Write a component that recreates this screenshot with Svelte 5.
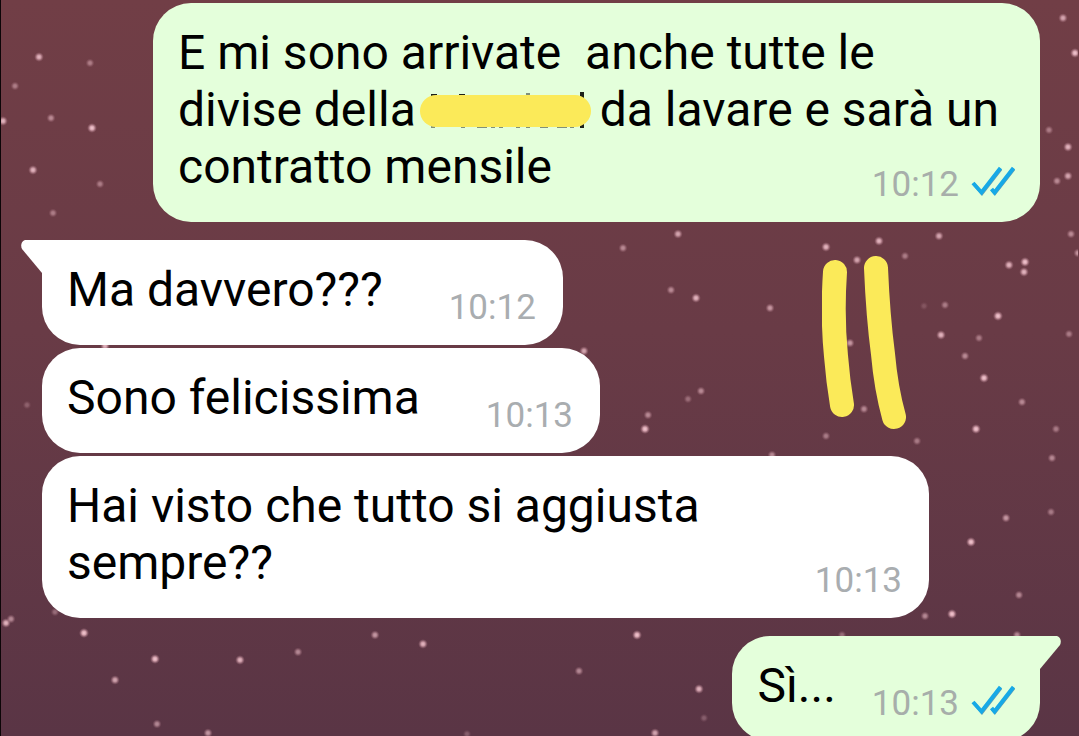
<script lang="ts">
	type Message = {
		id: number;
		type: 'sent' | 'received';
		parts: string[];
		time: string;
		first?: boolean;
		tail?: boolean;
	};

	// a gap between two parts is a name crossed out with the marker
	const messages: Message[] = [
		{
			id: 1,
			type: 'sent',
			parts: ['E mi sono arrivate\u00a0 anche tutte le divise della', 'da lavare e sarà un contratto mensile'],
			time: '10:12'
		},
		{ id: 2, type: 'received', parts: ['Ma davvero???'], time: '10:12', first: true, tail: true },
		{ id: 3, type: 'received', parts: ['Sono felicissima'], time: '10:13' },
		{ id: 4, type: 'received', parts: ['Hai visto che tutto si aggiusta sempre??'], time: '10:13' },
		{ id: 5, type: 'sent', parts: ['Sì...'], time: '10:13', first: true, tail: true }
	];

	// x, y, brightness
	const stars = [
		[39, 57, 0.9], [90, 63, 0.5], [15, 86, 0.5], [3, 121, 0.9], [51, 118, 0.6], [92, 128, 1],
		[33, 170, 0.9], [100, 184, 0.5], [53, 213, 0.5], [623, 248, 0.6], [678, 234, 0.8], [671, 290, 0.6],
		[696, 298, 0.9], [770, 308, 0.7], [584, 351, 0.8], [701, 391, 0.6], [688, 399, 0.4], [648, 415, 0.6],
		[645, 429, 1.1], [772, 455, 0.6], [826, 247, 0.9], [879, 241, 0.9], [857, 260, 0.8], [939, 236, 0.8],
		[905, 256, 0.5], [1009, 265, 0.9], [1025, 262, 1], [1024, 272, 0.9], [1071, 234, 0.6], [1078, 253, 0.7],
		[945, 305, 0.5], [924, 306, 0.2], [998, 316, 1.1], [941, 335, 0.9], [979, 338, 0.5], [1069, 334, 0.5],
		[965, 356, 0.6], [984, 378, 1], [850, 343, 0.7], [864, 409, 0.6], [826, 436, 0.5], [917, 441, 0.5],
		[1022, 402, 0.6], [976, 429, 1], [1056, 429, 0.5], [1052, 458, 0.6], [1006, 518, 0.7], [1051, 512, 0.5],
		[971, 542, 1], [1019, 595, 0.6], [925, 616, 0.6], [952, 614, 1], [1017, 635, 0.6], [1063, 18, 0.8],
		[1075, 53, 1], [1049, 130, 0.5], [1068, 147, 0.9], [1068, 176, 0.8], [1057, 181, 0.6],
		[6, 623, 0.9], [11, 619, 0.6], [84, 633, 1.1], [155, 659, 1], [115, 680, 0.8], [240, 660, 0.9],
		[298, 652, 0.6], [157, 724, 0.6], [208, 733, 0.7], [375, 635, 0.7], [423, 644, 0.9], [637, 635, 1],
		[579, 671, 0.6], [699, 689, 0.9], [704, 718, 0.3], [655, 733, 0.8], [842, 635, 0.4], [467, 734, 0.3],
		[105, 346, 0.9], [27, 405, 0.3], [55, 612, 0.4]
	];
</script>

<main class="chat">
	<svg class="wallpaper" aria-hidden="true">
		<defs>
			<radialGradient id="star">
				<stop offset="0" stop-color="#f6cdd6" />
				<stop offset="0.4" stop-color="#e3b0bb" stop-opacity="0.9" />
				<stop offset="1" stop-color="#a87482" stop-opacity="0" />
			</radialGradient>
		</defs>
		{#each stars as [x, y, light]}
			<circle cx={x} cy={y} r={4 + light} opacity={Math.min(light, 1)} fill="url(#star)" />
		{/each}
	</svg>

	{#each messages as message (message.id)}
		<article class="message {message.type}" class:first={message.first} class:tailed={message.tail}>
			{#if message.tail}
				<svg class="tail" viewBox="0 0 22 34" aria-hidden="true">
					<path d="M22 0H5C1 0-1 5 1 9L21 33H22Z" />
				</svg>
			{/if}
			{#each message.parts as part, i}
				{#if i > 0}
					<svg class="redacted" viewBox="0 0 171 38" aria-hidden="true">
						<path class="ink" d="M11 2h6v5h-6zM39 2h6v5h-6zM160 0h4v36h-4z" />
						<path
							class="ink faint"
							d="M106 1h4v4h-4zM11 33h4v3h-4zM41 33h4v3h-4zM57 33h10v3h-10zM71 33h4v3h-4zM79 33h4v3h-4zM96 33h4v3h-4zM106 33h4v3h-4zM120 33h8v3h-8zM137 33h10v3h-10zM150 33h4v3h-4z"
						/>
						<rect y="3" width="171" height="32" rx="16" />
					</svg>
				{/if}{part}
			{/each}
			<span class="meta">
				<time>{message.time}</time>
				{#if message.type === 'sent'}
					<svg class="ticks" viewBox="0 0 45 32" role="img" aria-label="letto">
						<path class="shade" d="M3 18 11 27.500 30 3M21 24 24 27.500 43 3" />
						<path d="M2 17 10.500 26.500 29.500 2M20.500 23 23.500 26.500 42.500 2" />
					</svg>
				{/if}
			</span>
		</article>
	{/each}

	<svg class="marker" viewBox="0 0 84 174" aria-hidden="true">
		<path d="M13 16Q10 60 14 100Q16 125 20 149" />
		<path d="M54 12Q56 60 61 98Q64 132 72 161" />
	</svg>
</main>

<style>
	:global(body) {
		margin: 0;
		background: #5a3645;
	}

	.chat {
		position: relative;
		box-sizing: border-box;
		height: 100vh;
		overflow: hidden;
		display: flex;
		flex-direction: column;
		align-items: flex-start;
		gap: 3px;
		padding: 3px 39px 0 41px;
		border-left: 1px solid #0c0507;
		background: linear-gradient(#713e46, #693b46 45%, #5a3545);
		font-family: Roboto, 'Liberation Sans', sans-serif;
		font-size: 48px;
		line-height: 57px;
		color: #000;
	}

	.wallpaper {
		position: absolute;
		top: 0;
		left: -1px;
		width: 100%;
		height: 100%;
	}

	.message {
		position: relative;
		flex-shrink: 0;
		box-sizing: border-box;
		display: flow-root;
		max-width: calc(100% - 111px);
		padding: 21px 36px 16px 25px;
		border-radius: 38px;
		background: #fff;
	}

	.message.sent {
		align-self: flex-end;
		background: #e4ffdb;
	}

	.message.first {
		margin-top: 15px;
	}

	.received.tailed {
		border-top-left-radius: 0;
	}

	.sent.tailed {
		border-top-right-radius: 0;
	}

	.tail {
		position: absolute;
		top: 0;
		right: calc(100% - 1px);
		width: 22px;
		height: 34px;
		fill: #fff;
	}

	.sent .tail {
		right: auto;
		left: calc(100% - 1px);
		transform: scaleX(-1);
		fill: #e4ffdb;
	}

	.redacted {
		width: 171px;
		height: 38px;
		margin: 0 9px 0 4px;
		vertical-align: -4px;
		fill: #fbea59;
	}

	.ink {
		fill: #1c211a;
	}

	.faint {
		opacity: 0.5;
	}

	/* sits lower than the last line of text, closer to the edge */
	.meta {
		float: right;
		display: flex;
		align-items: center;
		gap: 12px;
		margin: 26px -9px 0 66px;
		font-size: 35px;
		line-height: 42px;
		color: #a9adb0;
	}

	.sent .meta {
		margin-right: -12px;
		margin-left: 36px;
		color: #a7aeaa;
	}

	.ticks {
		width: 45px;
		height: 32px;
		margin-bottom: 6px;
		fill: none;
		stroke: #17a9e6;
		stroke-width: 4;
	}

	.shade {
		stroke: #6f9fae;
		stroke-width: 3;
	}

	/* pen strokes drawn over the chat */
	.marker {
		position: absolute;
		top: 256px;
		right: 173px;
		width: 84px;
		height: 174px;
		fill: none;
		stroke: #fbea59;
		stroke-width: 24;
		stroke-linecap: round;
	}
</style>
